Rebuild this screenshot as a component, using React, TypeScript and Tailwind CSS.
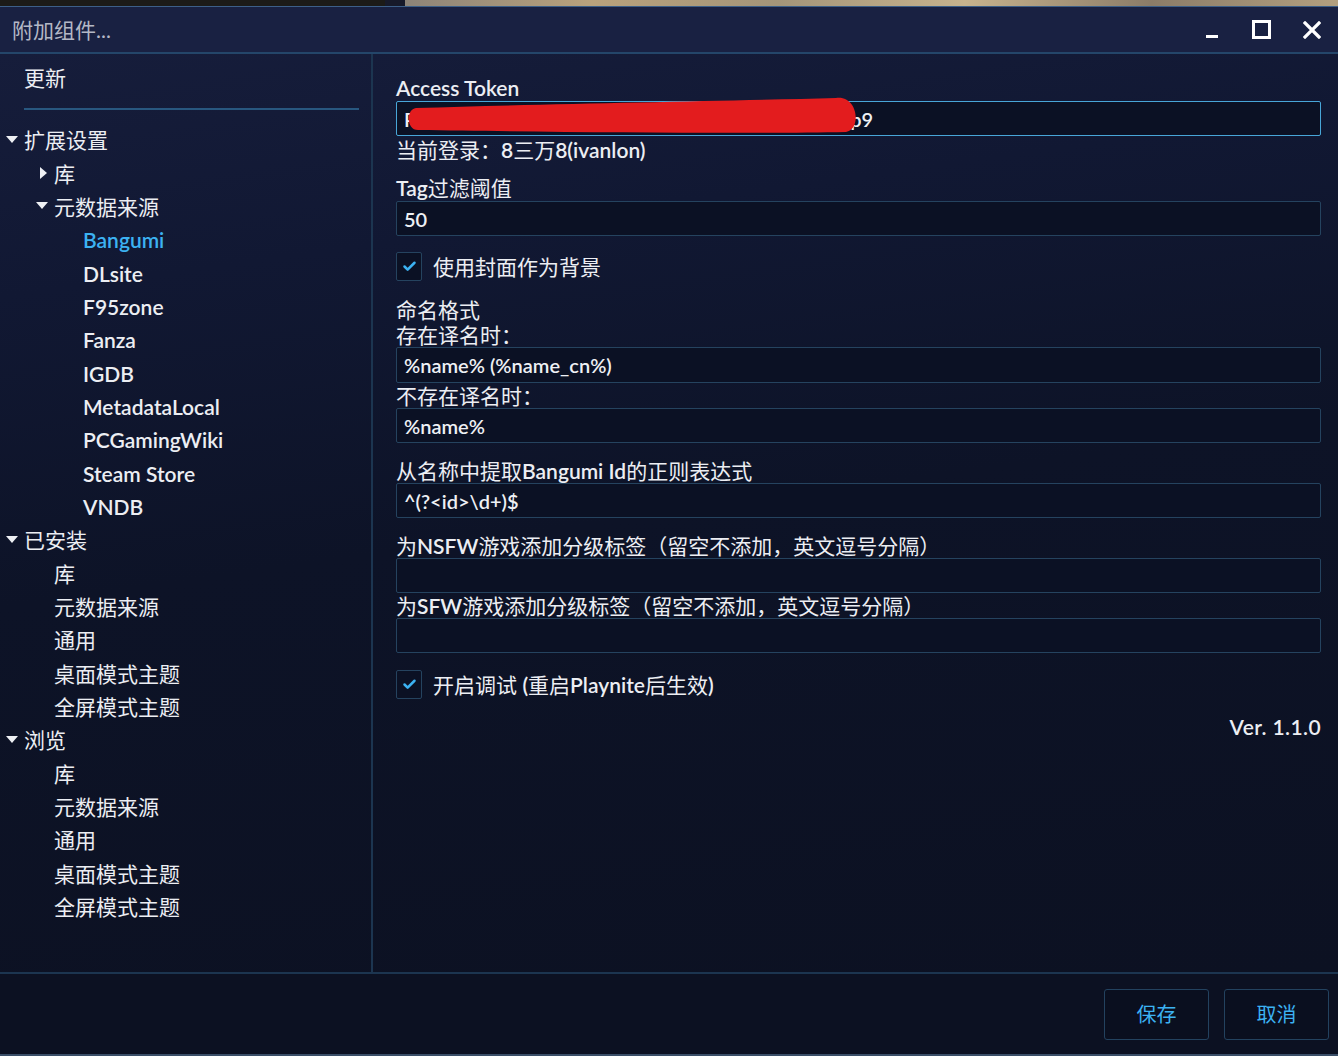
import { Check } from 'lucide-react';

const font = "font-['Lato','Noto_Sans_CJK_SC',sans-serif]";

type Node = { label: string; level: 0 | 1 | 2; arrow?: 'down' | 'right'; active?: boolean; latin?: boolean };

const tree: Node[] = [
  { label: '扩展设置', level: 0, arrow: 'down' },
  { label: '库', level: 1, arrow: 'right' },
  { label: '元数据来源', level: 1, arrow: 'down' },
  { label: 'Bangumi', level: 2, active: true, latin: true },
  { label: 'DLsite', level: 2, latin: true },
  { label: 'F95zone', level: 2, latin: true },
  { label: 'Fanza', level: 2, latin: true },
  { label: 'IGDB', level: 2, latin: true },
  { label: 'MetadataLocal', level: 2, latin: true },
  { label: 'PCGamingWiki', level: 2, latin: true },
  { label: 'Steam Store', level: 2, latin: true },
  { label: 'VNDB', level: 2, latin: true },
  { label: '已安装', level: 0, arrow: 'down' },
  { label: '库', level: 1 },
  { label: '元数据来源', level: 1 },
  { label: '通用', level: 1 },
  { label: '桌面模式主题', level: 1 },
  { label: '全屏模式主题', level: 1 },
  { label: '浏览', level: 0, arrow: 'down' },
  { label: '库', level: 1 },
  { label: '元数据来源', level: 1 },
  { label: '通用', level: 1 },
  { label: '桌面模式主题', level: 1 },
  { label: '全屏模式主题', level: 1 },
];

const Arrow = ({ dir }: { dir: 'down' | 'right' }) =>
  dir === 'down' ? (
    <svg width="12" height="8" viewBox="0 0 12 8" className="shrink-0">
      <polygon points="0,0 12,0 6,7" fill="#eef0f4" />
    </svg>
  ) : (
    <svg width="7" height="12" viewBox="0 0 7 12" className="shrink-0">
      <polygon points="0,0 7,6 0,12" fill="#eef0f4" />
    </svg>
  );

const TreeRow = ({ node }: { node: Node }) => {
  const pad = node.level === 0 ? 'pl-[24px]' : node.level === 1 ? 'pl-[54px]' : 'pl-[83px]';
  return (
    <div className={`relative flex h-[33.35px] items-center ${pad}`}>
      {node.arrow && (
        <span
          className={`absolute flex items-center ${
            node.level === 0 ? 'left-[6px]' : node.arrow === 'down' ? 'left-[36px]' : 'left-[40px]'
          }`}
        >
          <Arrow dir={node.arrow} />
        </span>
      )}
      <span
        className={`text-[21px] leading-none ${node.latin ? 'font-semibold' : ''} ${
          node.active ? 'text-[#3cb2f2]' : 'text-[#eceef3]'
        }`}
      >
        {node.label}
      </span>
    </div>
  );
};

const Field = ({ value, className = '' }: { value?: string; className?: string }) => (
  <div
    className={`flex h-[35px] items-center rounded-[2px] border border-[#25435f] bg-[#0b1124] pl-[7px] text-[20px] font-semibold text-[#eef0f4] ${className}`}
  >
    {value}
  </div>
);

const Label = ({ children, className = '' }: { children: React.ReactNode; className?: string }) => (
  <div className={`flex h-[24px] items-center text-[21px] leading-none text-[#eceef3] ${className}`}>{children}</div>
);

const CheckRow = ({ children, className = '' }: { children: React.ReactNode; className?: string }) => (
  <div className={`flex h-[29px] items-center gap-[11px] ${className}`}>
    <div className="flex h-[29px] w-[26px] items-center justify-center rounded-[2px] border border-[#25435f] bg-[#0b1124]">
      <Check className="h-[15px] w-[15px] text-[#3cb2f2]" strokeWidth={4} />
    </div>
    <span className="text-[21px] leading-none text-[#eceef3]">{children}</span>
  </div>
);

const B = ({ children }: { children: React.ReactNode }) => <span className="font-semibold">{children}</span>;

export default function App() {
  return (
    <div className={`flex h-[1056px] w-[1338px] flex-col overflow-hidden bg-[#0c1122] ${font}`}>
      <div className="flex h-[6px] shrink-0">
        <div className="w-[385px] bg-[#1c1b18]" />
        <div className="w-[20px] bg-[#171a2a]" />
        <div className="flex-1 bg-[linear-gradient(90deg,#8d8478_0%,#b9a27c_20%,#a49579_40%,#c7b38d_60%,#8b7c68_80%,#b3a07f_100%)]" />
      </div>

      <div className="flex flex-1 flex-col border-t border-[#3d5f88]">
        {/* title bar */}
        <div className="flex h-[47px] shrink-0 items-center justify-between border-b-2 border-[#24466a] bg-[#192142] pl-[12px] pr-[17px]">
          <span className="text-[21px] text-[#b4b8c6]">附加组件...</span>
          <div className="flex items-center">
            <div className="mt-[14px] h-[3px] w-[12px] bg-white" />
            <div className="ml-[34px] h-[19px] w-[19px] border-[3px] border-white" />
            <svg width="18" height="18" viewBox="0 0 18 18" className="ml-[32px]">
              <path d="M2 2 L16 16 M16 2 L2 16" stroke="white" strokeWidth="3.2" strokeLinecap="square" />
            </svg>
          </div>
        </div>

        {/* main */}
        <div className="flex h-[918px] shrink-0 bg-[linear-gradient(172deg,#161d3b_0%,#111833_22%,#0d1327_50%,#0c1122_100%)]">
          <aside className="w-[373px] shrink-0 border-r-2 border-[#1c3550]">
            <div className="mt-[11px] flex h-[25px] items-center pl-[24px] text-[21px] leading-none text-[#eceef3]">更新</div>
            <div className="ml-[24px] mr-[12px] mt-[18px] h-[2px] bg-[#28577f]" />
            <div className="mt-[13px]">
              {tree.map((n, i) => (
                <TreeRow key={i} node={n} />
              ))}
            </div>
          </aside>

          <section className="flex-1 pl-[23px] pr-[17px] pt-[21px]">
            <Label>
              <B>Access Token</B>
            </Label>
            <div className="relative mt-[2px]">
              <div className="flex h-[35px] items-center rounded-[2px] border border-[#48a6d8] bg-[#0b1124] pl-[7px] text-[20px] font-semibold text-[#eef0f4]">
                <span>P</span>
                <span className="ml-[434px]">p9</span>
              </div>
              <svg width="480" height="44" viewBox="0 -8 480 44" className="absolute left-0 top-[-8px]">
                <path
                  d="M20 7 C150 3 330 0 440 -3 C462 -6 466 28 450 31 C350 33 150 31 22 29 C10 29 10 8 20 7 Z"
                  fill="#e31c1e"
                />
              </svg>
            </div>
            <Label className="mt-[1px]">
              当前登录：<B>8</B>三万<B>8(ivanlon)</B>
            </Label>
            <Label className="mt-[14px]">
              <B>Tag</B>过滤阈值
            </Label>
            <Field value="50" className="mt-[2px]" />
            <CheckRow className="mt-[16px]">使用封面作为背景</CheckRow>
            <Label className="mt-[16px]">命名格式</Label>
            <Label className="mt-[1px]">存在译名时：</Label>
            <Field value="%name% (%name_cn%)" className="mt-[1px] h-[36px]" />
            <Label>不存在译名时：</Label>
            <Field value="%name%" className="mt-[1px]" />
            <Label className="mt-[15px]">
              从名称中提取<B>Bangumi Id</B>的正则表达式
            </Label>
            <Field value="^(?<id>\d+)$" className="mt-[1px]" />
            <Label className="mt-[15px]">
              为<B>NSFW</B>游戏添加分级标签（留空不添加，英文逗号分隔）
            </Label>
            <Field className="mt-[1px]" />
            <Label>
              为<B>SFW</B>游戏添加分级标签（留空不添加，英文逗号分隔）
            </Label>
            <Field className="mt-[1px]" />
            <CheckRow className="mt-[17px]">
              开启调试 <B>(</B>重启<B>Playnite</B>后生效<B>)</B>
            </CheckRow>
            <div className="mt-[16px] flex h-[24px] items-center justify-end text-[21px] font-semibold tracking-[0.4px] text-[#eceef3]">
              Ver. 1.1.0
            </div>
          </section>
        </div>

        {/* footer */}
        <div className="flex flex-1 items-center justify-end gap-[15px] border-b-2 border-t-2 border-b-[#3a4e68] border-t-[#1c3550] bg-[#0c1122] pr-[9px]">
          <button className="h-[51px] w-[105px] rounded-[3px] border border-[#23425f] bg-[#0a0f1f] text-[20px] text-[#3cb2f2]">保存</button>
          <button className="h-[51px] w-[105px] rounded-[3px] border border-[#23425f] bg-[#0a0f1f] text-[20px] text-[#3cb2f2]">取消</button>
        </div>
      </div>
    </div>
  );
}
